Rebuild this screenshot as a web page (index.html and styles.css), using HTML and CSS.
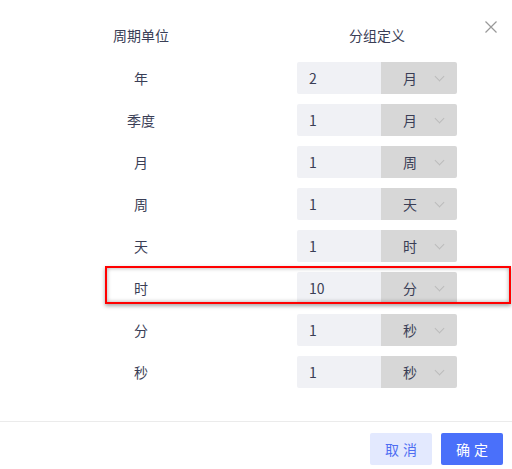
FILE: index.html
```html
<!DOCTYPE html>
<html lang="zh">
<head>
<meta charset="utf-8">
<link rel="stylesheet" href="styles.css">
</head>
<body>
<div class="dialog">
  <button class="close" aria-label="关闭">
    <svg width="12" height="12" viewBox="0 0 12 12"><path d="M0.5 0.5L11.5 11.5M11.5 0.5L0.5 11.5" stroke="#999" stroke-width="1.2" fill="none"/></svg>
  </button>
  <div class="head">
    <div class="label">周期单位</div>
    <div class="field-head">分组定义</div>
  </div>
  <div class="rows">
    <div class="row"><div class="label">年</div><div class="field"><span class="num">2</span><span class="sel"><span>月</span><i class="chev"></i></span></div></div>
    <div class="row"><div class="label">季度</div><div class="field"><span class="num">1</span><span class="sel"><span>月</span><i class="chev"></i></span></div></div>
    <div class="row"><div class="label">月</div><div class="field"><span class="num">1</span><span class="sel"><span>周</span><i class="chev"></i></span></div></div>
    <div class="row"><div class="label">周</div><div class="field"><span class="num">1</span><span class="sel"><span>天</span><i class="chev"></i></span></div></div>
    <div class="row"><div class="label">天</div><div class="field"><span class="num">1</span><span class="sel"><span>时</span><i class="chev"></i></span></div></div>
    <div class="row marked"><div class="label">时</div><div class="field"><span class="num">10</span><span class="sel"><span>分</span><i class="chev"></i></span></div><div class="mark"></div></div>
    <div class="row"><div class="label">分</div><div class="field"><span class="num">1</span><span class="sel"><span>秒</span><i class="chev"></i></span></div></div>
    <div class="row"><div class="label">秒</div><div class="field"><span class="num">1</span><span class="sel"><span>秒</span><i class="chev"></i></span></div></div>
  </div>
  <div class="footer">
    <button class="btn cancel">取消</button>
    <button class="btn ok">确定</button>
  </div>
</div>
</body>
</html>
```
FILE: styles.css
```css
* { box-sizing: border-box; }
html, body { margin: 0; padding: 0; background: #fff; }
body {
  width: 512px;
  height: 469px;
  overflow: hidden;
  font-family: "Noto Sans CJK SC", "Noto Sans", sans-serif;
  font-size: 14px;
  color: #3a3e56;
}
.dialog { position: relative; width: 512px; height: 469px; padding-top: 25px; }
.close {
  position: absolute; top: 21px; left: 485px;
  width: 12px; height: 12px; padding: 0; border: 0; background: none;
  display: flex;
}
.head { display: flex; height: 20px; line-height: 20px; margin-bottom: 17px; }
.label { width: 282px; text-align: center; flex: none; }
.field-head { margin-left: 15px; width: 160px; text-align: center; }
.rows { display: flex; flex-direction: column; gap: 10px; }
.row { display: flex; align-items: center; height: 32px; position: relative; }
.field { margin-left: 15px; width: 160px; height: 32px; display: flex; border-radius: 2px; overflow: hidden; }
.num { width: 84px; background: #f0f1f5; padding-left: 12px; line-height: 32px; }
.sel { flex: 1; background: #d7d7d7; display: flex; align-items: center; padding-left: 22px; line-height: 32px; }
.chev {
  width: 7px; height: 7px; margin-left: 19px; margin-top: -3px;
  border-right: 1px solid #bcbcbc; border-bottom: 1px solid #bcbcbc;
  transform: rotate(45deg);
}
.mark {
  position: absolute; left: 105px; top: -6px; width: 406px; height: 38px;
  border: 2px solid #f00;
  box-shadow: 0 2px 4px rgba(0,0,0,0.35), inset 0 0 4px rgba(0,0,0,0.35);
}
.footer {
  margin-top: 33px;
  border-top: 1px solid #ebebeb;
  display: flex; justify-content: flex-end; gap: 9px;
  padding: 11px 9px 0 0;
}
.btn {
  width: 62px; height: 32px; border: 0; border-radius: 2px;
  font-family: inherit; font-size: 14px; letter-spacing: 4px; padding: 0 0 0 4px;
}
.cancel { background: #e3e9fe; color: #4e6ef2; }
.ok { background: #4a70fa; color: #fff; }
```
